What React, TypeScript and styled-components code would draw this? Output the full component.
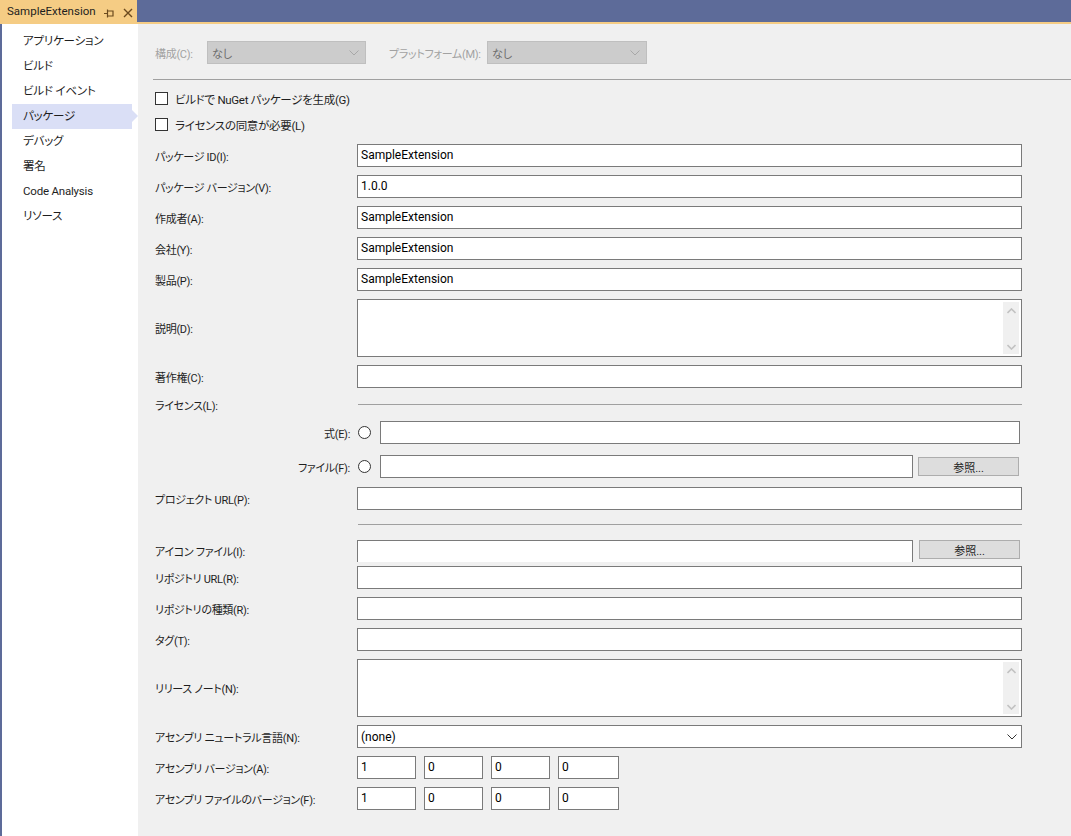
import React from 'react';
import styled, { createGlobalStyle } from 'styled-components';

const GlobalStyle = createGlobalStyle`
    html, body {
        margin: 0;
        padding: 0;
        background: #f0f0f0;
    }
    body {
        font-family: Roboto, "Noto Sans CJK JP", sans-serif;
        font-size: 12px;
        color: #1e1e1e;
        font-feature-settings: "palt";
    }
`;

const sideItems = ['アプリケーション', 'ビルド', 'ビルド イベント', 'パッケージ', 'デバッグ', '署名', 'Code Analysis', 'リソース'];

const PinIcon = () => (
    <svg width="10" height="10" viewBox="0 0 10 10">
        <path d="M0 5.5H3.5M3.5 1.5V9.5M3.5 3H9V8H3.5" stroke="#6b4a1e" strokeWidth="1.2" fill="none" />
    </svg>
);

const CloseIcon = () => (
    <svg width="10" height="10" viewBox="0 0 10 10">
        <path d="M1 1L9 9M9 1L1 9" stroke="#6b4a1e" strokeWidth="1.4" fill="none" />
    </svg>
);

const Chevron = ({ color }: { color: string }) => (
    <svg width="10" height="6" viewBox="0 0 10 6">
        <path d="M0.5 0.5L5 5L9.5 0.5" stroke={color} strokeWidth="1" fill="none" />
    </svg>
);

const ScrollBar = () => (
    <Scroll>
        <svg width="9" height="6" viewBox="0 0 9 6">
            <path d="M0.5 5L4.5 1L8.5 5" stroke="#c2c2c2" strokeWidth="1.6" fill="none" />
        </svg>
        <svg width="9" height="6" viewBox="0 0 9 6">
            <path d="M0.5 1L4.5 5L8.5 1" stroke="#c2c2c2" strokeWidth="1.6" fill="none" />
        </svg>
    </Scroll>
);

const App = () => {
    return (
        <Window>
            <GlobalStyle />
            <TitleBar>
                <Tab>
                    <TabTitle>SampleExtension</TabTitle>
                    <TabIcons>
                        <PinIcon />
                        <CloseIcon />
                    </TabIcons>
                </Tab>
            </TitleBar>
            <Body>
                <Sidebar>
                    {sideItems.map((s, i) => (
                        <SideItem key={s} $active={i === 3}>
                            {s}
                        </SideItem>
                    ))}
                </Sidebar>
                <Content>
                    <TopRow>
                        <DisabledLabel $w={52}>構成(C):</DisabledLabel>
                        <DisabledSelect $w={159}>
                            なし
                            <Chevron color="#a8a8a8" />
                        </DisabledSelect>
                        <DisabledLabel $w={98} $ml={23}>
                            プラットフォーム(M):
                        </DisabledLabel>
                        <DisabledSelect $w={160}>
                            なし
                            <Chevron color="#a8a8a8" />
                        </DisabledSelect>
                    </TopRow>
                    <FullRule />
                    <CheckRow $mt={10}>
                        <CheckBox />
                        ビルドで NuGet パッケージを生成(G)
                    </CheckRow>
                    <CheckRow $mt={9}>
                        <CheckBox />
                        ライセンスの同意が必要(L)
                    </CheckRow>

                    <Row $mt={11}>
                        <Label>パッケージ ID(I):</Label>
                        <Input>SampleExtension</Input>
                    </Row>
                    <Row>
                        <Label>パッケージ バージョン(V):</Label>
                        <Input>1.0.0</Input>
                    </Row>
                    <Row>
                        <Label>作成者(A):</Label>
                        <Input>SampleExtension</Input>
                    </Row>
                    <Row>
                        <Label>会社(Y):</Label>
                        <Input>SampleExtension</Input>
                    </Row>
                    <Row>
                        <Label>製品(P):</Label>
                        <Input>SampleExtension</Input>
                    </Row>
                    <Row $h={58}>
                        <Label>説明(D):</Label>
                        <TextArea>
                            <ScrollBar />
                        </TextArea>
                    </Row>
                    <Row>
                        <Label>著作権(C):</Label>
                        <Input />
                    </Row>
                    <Row $h={17}>
                        <Label>ライセンス(L):</Label>
                        <Rule />
                    </Row>
                    <Row>
                        <SubLabel>式(E):</SubLabel>
                        <Radio />
                        <Input $mr={2} />
                    </Row>
                    <Row $mt={11}>
                        <SubLabel>ファイル(F):</SubLabel>
                        <Radio />
                        <Input />
                        <Button $w={101} $ml={5} $mr={3}>
                            参照...
                        </Button>
                    </Row>
                    <Row $mt={9}>
                        <Label>プロジェクト URL(P):</Label>
                        <Input />
                    </Row>
                    <Row $mt={14} $h={1}>
                        <Label />
                        <Rule />
                    </Row>
                    <Row $mt={15} $h={22} $top>
                        <Label>アイコン ファイル(I):</Label>
                        <Input $open />
                        <Button $w={101} $ml={6} $mr={2}>
                            参照...
                        </Button>
                    </Row>
                    <Row $mt={4}>
                        <Label>リポジトリ URL(R):</Label>
                        <Input />
                    </Row>
                    <Row>
                        <Label>リポジトリの種類(R):</Label>
                        <Input />
                    </Row>
                    <Row>
                        <Label>タグ(T):</Label>
                        <Input />
                    </Row>
                    <Row $h={58}>
                        <Label>リリース ノート(N):</Label>
                        <TextArea>
                            <ScrollBar />
                        </TextArea>
                    </Row>
                    <Row>
                        <Label>アセンブリ ニュートラル言語(N):</Label>
                        <Select>
                            (none)
                            <Chevron color="#333333" />
                        </Select>
                    </Row>
                    <Row>
                        <Label>アセンブリ バージョン(A):</Label>
                        <VersionGroup>
                            <VersionBox>1</VersionBox>
                            <VersionBox>0</VersionBox>
                            <VersionBox>0</VersionBox>
                            <VersionBox $w={61}>0</VersionBox>
                        </VersionGroup>
                    </Row>
                    <Row>
                        <Label>アセンブリ ファイルのバージョン(F):</Label>
                        <VersionGroup>
                            <VersionBox>1</VersionBox>
                            <VersionBox>0</VersionBox>
                            <VersionBox>0</VersionBox>
                            <VersionBox $w={61}>0</VersionBox>
                        </VersionGroup>
                    </Row>
                </Content>
            </Body>
        </Window>
    );
};

export default App;

const Window = styled.div`
    display: flex;
    flex-direction: column;
    width: 1071px;
    height: 836px;
    overflow: hidden;
    background: #f0f0f0;
`;

const TitleBar = styled.div`
    display: flex;
    height: 22px;
    background: #5d6b99;
    border-bottom: 2px solid #f5cc84;
    flex-shrink: 0;
`;

const Tab = styled.div`
    display: flex;
    align-items: center;
    justify-content: space-between;
    width: 137px;
    height: 22px;
    padding: 0 4px 0 7px;
    box-sizing: border-box;
    background: #f5cc84;
`;

const TabTitle = styled.span`
    color: #1e1e1e;
    font-size: 11.5px;
    line-height: 22px;
    padding-bottom: 1px;
`;

const TabIcons = styled.div`
    display: flex;
    align-items: center;
    gap: 9px;
    margin-top: 3px;
`;

const Body = styled.div`
    display: flex;
    flex: 1;
    min-height: 0;
`;

const Sidebar = styled.nav`
    display: flex;
    flex-direction: column;
    width: 136px;
    padding-top: 5px;
    background: #ffffff;
    border-left: 2px solid #5d6b99;
    flex-shrink: 0;
`;

const SideItem = styled.div<{ $active?: boolean }>`
    position: relative;
    height: 25px;
    line-height: 25px;
    width: 120px;
    margin-left: 10px;
    padding-left: 11px;
    box-sizing: border-box;
    white-space: nowrap;
    font-size: 11.5px;
    letter-spacing: -0.2px;
    color: #1e1e1e;
    background: ${(p) => (p.$active ? '#dadff6' : 'transparent')};

    &::after {
        content: '';
        display: ${(p) => (p.$active ? 'block' : 'none')};
        position: absolute;
        right: -6px;
        top: 6px;
        border-top: 6px solid transparent;
        border-bottom: 6px solid transparent;
        border-left: 6px solid #dadff6;
    }
`;

const Content = styled.main`
    flex: 1;
    display: flex;
    flex-direction: column;
    padding-left: 17px;
    box-sizing: border-box;
`;

const TopRow = styled.div`
    display: flex;
    align-items: center;
    height: 23px;
    margin-top: 17px;
`;

const DisabledLabel = styled.span<{ $w: number; $ml?: number }>`
    width: ${(p) => p.$w}px;
    margin-left: ${(p) => p.$ml ?? 0}px;
    font-size: 11px;
    letter-spacing: -0.3px;
    color: #a2a2a2;
    white-space: nowrap;
    flex-shrink: 0;
`;

const DisabledSelect = styled.div<{ $w: number }>`
    display: flex;
    align-items: center;
    justify-content: space-between;
    width: ${(p) => p.$w}px;
    height: 23px;
    padding: 0 6px 0 4px;
    box-sizing: border-box;
    background: #cccccc;
    border: 1px solid #bfbfbf;
    font-size: 11px;
    color: #6d6d6d;
`;

const FullRule = styled.div`
    height: 1px;
    margin: 15px 0 0 -2px;
    background: #a0a0a0;
`;

const CheckRow = styled.div<{ $mt: number }>`
    display: flex;
    align-items: center;
    gap: 7px;
    height: 17px;
    margin-top: ${(p) => p.$mt}px;
    white-space: nowrap;
    font-size: 11.5px;
    letter-spacing: -0.3px;
`;

const CheckBox = styled.span`
    width: 13px;
    height: 13px;
    box-sizing: border-box;
    border: 1px solid #333333;
    background: #ffffff;
    flex-shrink: 0;
`;

const Row = styled.div<{ $h?: number; $mt?: number; $top?: boolean }>`
    display: flex;
    align-items: ${(p) => (p.$top ? 'flex-start' : 'center')};
    width: 867px;
    height: ${(p) => p.$h ?? 23}px;
    margin-top: ${(p) => p.$mt ?? 8}px;
    flex-shrink: 0;
`;

const Label = styled.span`
    width: 202px;
    flex-shrink: 0;
    white-space: nowrap;
    align-self: center;
    font-size: 11px;
    letter-spacing: -0.3px;
`;

const SubLabel = styled.span`
    width: 195px;
    flex-shrink: 0;
    text-align: right;
    white-space: nowrap;
    margin-right: 8px;
    font-size: 11px;
    letter-spacing: -0.3px;
`;

const Radio = styled.span`
    width: 13px;
    height: 13px;
    box-sizing: border-box;
    border: 1px solid #333333;
    border-radius: 50%;
    background: #ffffff;
    margin-right: 9px;
    flex-shrink: 0;
`;

const Input = styled.div<{ $mr?: number; $open?: boolean }>`
    flex: 1;
    min-width: 0;
    height: ${(p) => (p.$open ? 22 : 23)}px;
    line-height: 21px;
    padding-left: 3px;
    margin-right: ${(p) => p.$mr ?? 0}px;
    box-sizing: border-box;
    background: #ffffff;
    border: 1px solid #7a7a7a;
    border-bottom: ${(p) => (p.$open ? 'none' : '1px solid #7a7a7a')};
    color: #000000;
    white-space: nowrap;
    overflow: hidden;
`;

const TextArea = styled.div`
    flex: 1;
    display: flex;
    justify-content: flex-end;
    height: 58px;
    padding: 2px;
    box-sizing: border-box;
    background: #ffffff;
    border: 1px solid #7a7a7a;
`;

const Scroll = styled.div`
    display: flex;
    flex-direction: column;
    align-items: center;
    justify-content: space-between;
    width: 16px;
    padding: 6px 0 4px;
    box-sizing: border-box;
    background: #f0f0f0;
`;

const Rule = styled.div`
    flex: 1;
    height: 1px;
    margin-left: 1px;
    background: #a0a0a0;
`;

const Button = styled.div<{ $w: number; $ml: number; $mr: number }>`
    display: flex;
    align-items: center;
    justify-content: center;
    width: ${(p) => p.$w}px;
    height: 19px;
    margin: 0 ${(p) => p.$mr}px 0 ${(p) => p.$ml}px;
    box-sizing: border-box;
    background: #dddddd;
    border: 1px solid #adadad;
    font-size: 11px;
    color: #1e1e1e;
    flex-shrink: 0;
`;

const Select = styled.div`
    flex: 1;
    display: flex;
    align-items: center;
    justify-content: space-between;
    height: 23px;
    padding: 0 4px 0 3px;
    box-sizing: border-box;
    background: #ffffff;
    border: 1px solid #7a7a7a;
    color: #000000;
`;

const VersionGroup = styled.div`
    display: flex;
    gap: 8px;
`;

const VersionBox = styled.div<{ $w?: number }>`
    width: ${(p) => p.$w ?? 59}px;
    height: 23px;
    line-height: 21px;
    padding-left: 3px;
    box-sizing: border-box;
    background: #ffffff;
    border: 1px solid #7a7a7a;
    color: #000000;
`;
